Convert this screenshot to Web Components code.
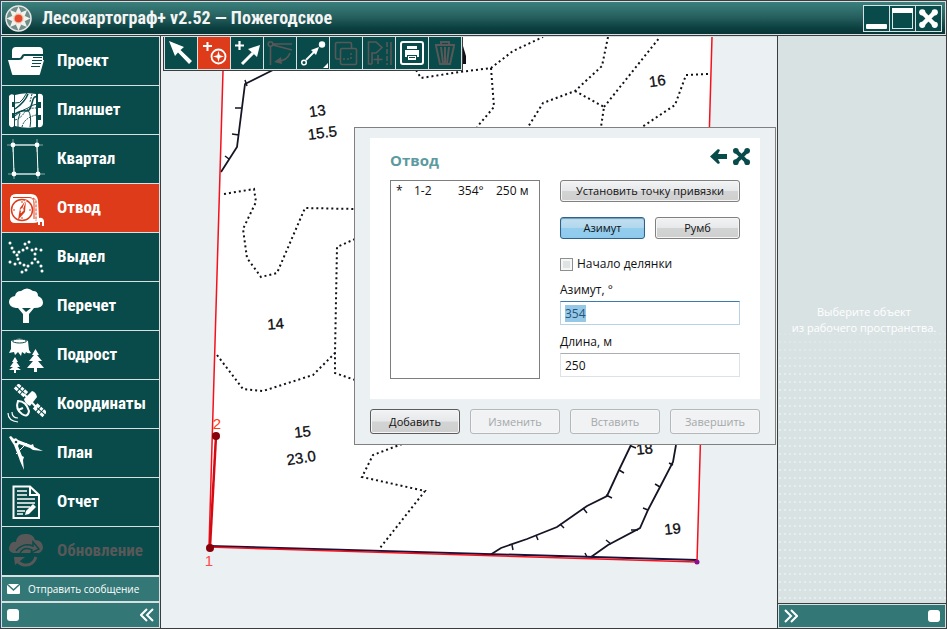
<!DOCTYPE html>
<html lang="ru">
<head>
<meta charset="utf-8">
<title>Лесокартограф+</title>
<style>
  html, body { margin: 0; height: 100%; }
  body {
    --deep: #094b4a; --teal: #337876; --line: #d8e1e1; --edge: #3c3c3e; --accent: #de3b1a; --pale: #ebf0f3; --off: #585858;
    --head: "Roboto Condensed", "Open Sans Condensed", Roboto, sans-serif;
    font-family: "Open Sans", "Noto Sans", sans-serif; font-size: 12px; color: #111;
  }
</style>
</head>
<body>
<app-window>
  <title-bar slot="title">Лесокартограф+ v2.52 — Пожегодское</title-bar>
  <side-nav slot="nav">
    <nav-item icon="project">Проект</nav-item>
    <nav-item icon="sheet">Планшет</nav-item>
    <nav-item icon="quarter">Квартал</nav-item>
    <nav-item icon="allot" active>Отвод</nav-item>
    <nav-item icon="stand">Выдел</nav-item>
    <nav-item icon="tree">Перечет</nav-item>
    <nav-item icon="growth">Подрост</nav-item>
    <nav-item icon="sat">Координаты</nav-item>
    <nav-item icon="plan">План</nav-item>
    <nav-item icon="report">Отчет</nav-item>
    <nav-item icon="update" disabled>Обновление</nav-item>
  </side-nav>
  <map-view slot="map">
    <tool-bar slot="tools">
      <tool-button icon="pointer" label="Выбор"></tool-button>
      <tool-button icon="anchor" label="Точка привязки" active></tool-button>
      <tool-button icon="addline" label="Добавить линию"></tool-button>
      <tool-button icon="angle" label="Угол" disabled></tool-button>
      <tool-button icon="segment" label="Отрезок"></tool-button>
      <tool-button icon="copy" label="Копировать" disabled></tool-button>
      <tool-button icon="park" label="Добавить участок" disabled></tool-button>
      <tool-button icon="print" label="Печать"></tool-button>
      <tool-button icon="trash" label="Удалить" disabled></tool-button>
    </tool-bar>
    <allot-dialog slot="dialog"></allot-dialog>
  </map-view>
  <info-panel slot="info">Выберите объект<br>из рабочего пространства.</info-panel>
</app-window>

<script>
const NAV = {
  project: `<path fill="currentColor" d="M6 17V10Q6 6 10 6H33Q37 6 37 10V13H18Q16 13 15 16L14 17Z"/><path fill="currentColor" d="M2 19H13Q16 19 17 17L18 15H37V19H38L34 33Q34 34 33 34H7Q6 34 6 33Z"/><path fill="none" stroke="var(--bg)" d="M27 16.5H36M26 19.5H36M26 22.5H35M25 25.5H34"/>`,
  sheet: `<path fill="currentColor" d="M3 6Q5 3 8 5V12H6V17H8V23H6V28H8V36Q5 39 3 35ZM9 5Q19 2 30 4V37Q20 39 9 36ZM32 4Q36 3 37 6V34Q36 38 32 37V30H35V25H32V18H35V12H32Z"/><g fill="none" stroke="var(--bg)"><path stroke-width="1.500" d="M9 24Q16 20 20 21T26 13T31 8M22 4Q19 12 9 19"/><path d="M9 13Q14 14 17 9T21 3M31 14Q25 15 22 18Q15 20 9 26M14 23Q11 30 12 37M22 20Q26 26 24 37"/><path stroke-dasharray="2 1" d="M9 30Q15 28 18 23T30 18M26 4L24 12M16 37Q18 28 30 25"/></g>`,
  quarter: `<g fill="none" stroke="currentColor"><path d="M7 6H31L32 35H8Z"/><path opacity=".5" d="M1 6H37M7 0V13M31 0V13M2 35H39M8 29V40M32 29V40"/></g><g fill="currentColor"><circle cx="7" cy="6" r="2.4"/><circle cx="31" cy="6" r="2.4"/><circle cx="8" cy="35" r="2.4"/><circle cx="32" cy="35" r="2.4"/></g>`,
  allot: `<path fill="currentColor" d="M4 12Q4 6 10 6H25Q31 6 32 12L33 30Q37 29 38 33V38H36V34H34V37H32V34Q30 35 27 35H9Q4 35 4 30Z"/><g fill="none" stroke="var(--bg)"><circle cx="16" cy="22" r="10.5" stroke-width="1.500"/><path d="M7 9.500H23Q28 9.500 28 15V31" /><path d="M27 10L30 12V33" stroke-dasharray="3 1"/><path d="M16 13V15M16 29V31M7 22H9M23 22H25"/></g><path fill="var(--bg)" d="M20 12L19 24L12 32L14 20Z"/><circle cx="16" cy="22" r="1.7" fill="currentColor"/><path stroke="currentColor" d="M20 12L15 25"/>`,
  stand: `<path fill="none" stroke="currentColor" stroke-width="3" stroke-linecap="round" d="${[[4,6],[6,11],[8,15],[13,15],[17,13],[21,11],[19,7],[23,5],[26,13],[30,12],[35,13],[29,17],[29,22],[26,26],[32,25],[35,29],[36,34],[22,29],[18,28],[20,33],[16,35],[14,26],[9,27],[4,25],[12,22],[11,18]].map(p => `M${p[0]} ${p[1]}h.01`).join('')}"/>`,
  tree: `<path fill="currentColor" d="M10 22Q3 21 3 16Q3 11 9 10Q10 5 15 5Q21 0 27 5Q32 5 32 10Q37 12 37 17Q37 22 28 22L23 28V37H17V28L12 22Z"/><path fill="var(--bg)" d="M16 22H25L20 26Z"/>`,
  growth: `<path fill="currentColor" d="M5 6Q13 1 22 6L23 15L25 18Q22 19 20 17L19 19L16 17L15 21L12 17L9 20L8 17L3 18L5 14Z"/><ellipse cx="13.5" cy="6" rx="7" ry="2" fill="none" stroke="var(--bg)"/><path fill="currentColor" d="M9 22L12 27H10.500L14 32H11L15 35H10V38H8V35H3L7 32H4L7.500 27H6ZM29.500 14L33 20H31L36 26H32L38 33H31V37H28V33H21L27 26H23L28 20H26Z"/>`,
  sat: `<g transform="rotate(42 15 7)" fill="currentColor"><path d="M8 3h4v3H8zM13 3h3v3h-3zM17 3h4v3h-4zM8 7h4v3H8zM13 7h3v3h-3zM17 7h4v3h-4z"/></g><g transform="translate(19 20) rotate(42 15 7)" fill="currentColor"><path d="M8 3h4v3H8zM13 3h3v3h-3zM17 3h4v3h-4zM8 7h4v3H8zM13 7h3v3h-3zM17 7h4v3h-4z"/></g><path stroke="currentColor" stroke-width="2" d="M18 10L31 24"/><path fill="currentColor" d="M18 15L26 7Q30 8 31 13L24 22Q19 20 18 15Z"/><path fill="none" stroke="currentColor" stroke-width="2" d="M12 17Q20 17 23 27Q22 34 16 30Q9 25 12 17ZM17 24L12 26"/><path fill="none" stroke="currentColor" stroke-width="1.200" d="M2 29Q2 37 12 38M6 28Q6 34 12 34"/>`,
  plan: `<path fill="currentColor" d="M3 4L5 3L8 6Q10 4 12 7L25 12L27 11L28 14L37 18L27 17L24 15L13 11L12 13L16 23L18 24L17 27L18 37L14 28L13 25L8 12L6 9Z"/><circle cx="10" cy="9" r="1.300" fill="var(--bg)"/><path stroke="currentColor" d="M10 21L21 10" fill="none"/>`,
  report: `<path fill="none" stroke="currentColor" stroke-width="2" d="M7.500 4.500H24L33 13V36H7.500ZM24 4.500V13H33"/><path stroke="currentColor" stroke-width="1.600" d="M11 9H21M11 13H21M11 17H29M11 21H29M11 25H24M11 29H19M11 32H17"/><path fill="currentColor" d="M19 33L20 29L27 22L30 25L23 32Z"/>`,
  update: `<path fill="currentColor" d="M7 22Q1 20 4 14Q6 10 10 11Q11 3 19 3Q27 2 29 9Q36 9 37 16Q37 20 33 22Z"/><path fill="none" stroke="var(--bg)" stroke-width="1.500" d="M10 20Q17 11 27 15L27 11L33 18L25 22L26 19Q18 15 14 22"/><path fill="none" stroke="currentColor" stroke-width="3" d="M30 26Q27 35 18 34Q13 33 11 29"/><path fill="currentColor" d="M8 26H19L9 34Z"/>`
};
const TOOL = {
  pointer: `<path fill="currentColor" d="M4 4L19 10L15.500 13L27 24L24 27L13 15.500L10 19Z"/>`,
  anchor: `<path stroke="currentColor" stroke-width="2" d="M5 9H14M9.500 5V14"/><circle cx="20.500" cy="19.500" r="7" fill="none" stroke="currentColor" stroke-width="1.800"/><path fill="currentColor" d="M20.500 14L21.700 18.300L26 19.500L21.700 20.700L20.500 25L19.300 20.700L15 19.500L19.300 18.300Z"/>`,
  addline: `<path stroke="currentColor" stroke-width="2.200" d="M4 8.500H13M8.500 4V13"/><path stroke="currentColor" stroke-width="3" d="M11 27L22 16"/><path fill="currentColor" d="M29 8L26 20L17 12Z"/>`,
  angle: `<g fill="none" stroke="currentColor" stroke-width="1.600"><circle cx="6.500" cy="7" r="2.300"/><path d="M9 7H28M9 8L28 13M6.500 9V28M26 16Q23 24 14 24"/></g><path fill="currentColor" d="M10 25L17 20L18 27Z"/>`,
  segment: `<circle cx="7" cy="25.500" r="2.300" fill="none" stroke="currentColor" stroke-width="1.500"/><circle cx="25" cy="7.500" r="3.200" fill="currentColor"/><path stroke="currentColor" stroke-width="1.800" d="M9 23L18 14"/><path fill="currentColor" d="M22 10L19 18L14 13ZM31 26V31H26Z"/>`,
  copy: `<path fill="none" stroke="currentColor" stroke-width="1.600" d="M10 22H7Q5.500 22 5.500 20V7Q5.500 5.500 7 5.500H20Q21.500 5.500 21.500 7V11M12 11.500H25Q26.500 11.500 26.500 13V26Q26.500 27.500 25 27.500H12Q10.500 27.500 10.500 26V13Q10.500 11.500 12 11.500Z"/><path fill="none" stroke="currentColor" stroke-width="1.500" stroke-dasharray="2 2" d="M13 22H21V14"/>`,
  park: `<path fill="none" stroke="currentColor" stroke-width="1.600" d="M9 27H5.500V5H13L19 10.500L13 16H9V27M15 18V27M10.500 22.500H19.500"/><path fill="none" stroke="currentColor" stroke-width="1.600" stroke-dasharray="5 2" d="M24 5V28"/><path stroke="currentColor" stroke-width="1.600" d="M28 5V28"/>`,
  print: `<rect x="5" y="5" width="22" height="22" rx="2" fill="none" stroke="currentColor" stroke-width="2"/><path fill="currentColor" d="M11 9H21V12H11ZM9 13H23V20H21V18H11V20H9ZM12 19H20V23H12Z"/><path stroke="var(--bg)" d="M13 20.500H19"/>`,
  trash: `<path fill="none" stroke="currentColor" stroke-width="2" d="M6 8H26M12 7V5H20V7M7 9L11 27H21L25 9M12 10L14 26M16 10V26M20 10L18 26"/>`
};
const KNOT = `<g fill="currentColor"><path d="M5 8L8 5L19 16L16 19ZM16 5L19 8L8 19L5 16Z"/><circle cx="6" cy="6" r="3"/><circle cx="18" cy="6" r="3"/><circle cx="6" cy="18" r="3"/><circle cx="18" cy="18" r="3"/></g>`;

class Base extends HTMLElement {
  constructor() { super(); this.attachShadow({ mode: 'open' }); }
  connectedCallback() {
    this.shadowRoot.innerHTML = `<style>*{box-sizing:border-box}button{font:inherit;color:inherit;margin:0;padding:0;border:0;background:none}svg{display:block}${this.css()}</style>${this.html()}`;
    this.ready();
  }
  css() { return ''; } html() { return ''; } ready() {}
}

customElements.define('app-window', class extends Base {
  css() { return `:host{display:grid;box-sizing:border-box;height:100vh;grid-template:auto minmax(0,1fr)/159px minmax(0,1fr) 168px;border:1px solid var(--edge);border-left-color:#2b4a6a;background:var(--edge);column-gap:1px}
    ::slotted([slot=title]){grid-column:1/-1}`; }
  html() { return `<slot name="title"></slot><slot name="nav"></slot><slot name="map"></slot><slot name="info"></slot>`; }
});

customElements.define('title-bar', class extends Base {
  css() { return `:host{display:block;border-bottom:1px solid var(--edge)}
    header{display:flex;align-items:center;height:34px;padding:0 3px 0 3px;border:1px solid var(--line);background:linear-gradient(#3a807d,#27615f 45%,#0c4141 80%,#083435);color:#f4f4f4}
    h1{flex:1;margin:0 0 0 10px;font:bold 18px/32px var(--head);white-space:nowrap}
    .win{display:flex;gap:1px;padding:1px;background:var(--line)}
    button{width:25px;height:25px;background:var(--deep)}`; }
  html() { return `<header><svg width="27" height="27" viewBox="0 0 27 27"><circle cx="13.500" cy="13.500" r="12.500" fill="#6f8d8a" stroke="#e8e8e8" stroke-width="1.500"/><g fill="#f2f2ec">${[0,45,90,135,180,225,270,315].map(a => `<path transform="rotate(${a} 13.5 13.5)" d="M13.500 1.500L16 7L15 12H12L11 7Z"/>`).join('')}</g><circle cx="13.500" cy="13.500" r="5" fill="#f0b8a0"/><circle cx="13.500" cy="13.500" r="3.800" fill="#e5492b"/></svg><h1><slot></slot></h1><div class="win">
    <button aria-label="Свернуть"><svg width="25" height="25"><rect x="2" y="18" width="21" height="5" rx="1" fill="#fff"/></svg></button>
    <button aria-label="Развернуть"><svg width="25" height="25"><rect x="2.500" y="2.500" width="20" height="20" fill="none" stroke="#dfe8e8"/><rect x="2" y="2" width="21" height="5" fill="#fff"/></svg></button>
    <button aria-label="Закрыть"><svg width="25" height="25" viewBox="0 0 24 24" color="#fff">${KNOT}</svg></button></div></header>`; }
});

customElements.define('side-nav', class extends Base {
  css() { return `:host{display:flex;flex-direction:column;min-height:0;background:var(--line);border:1px solid var(--line);border-right:0;border-left:0;padding:0 1px;gap:2px}
    nav{flex:1;display:grid;grid-auto-rows:minmax(0,1fr);gap:1px;min-height:0}
    .msg,.foot{display:flex;align-items:center;height:24px;background:var(--teal);color:#fff;width:100%}
    .msg{padding:0 5px;gap:8px;font-size:10px}
    .foot{justify-content:space-between;padding:0 5px}`; }
  html() { return `<nav><slot></slot></nav><button class="msg"><svg width="13" height="11" viewBox="0 0 13 11"><path fill="#fff" d="M1 0H12L6.500 5ZM0 1L6.500 7L13 1V9Q13 10 12 10H1Q0 10 0 9Z"/></svg>Отправить сообщение</button>
    <div class="foot"><svg width="12" height="12"><rect width="12" height="12" rx="3" fill="#fff"/></svg><button aria-label="Скрыть панель"><svg width="14" height="14"><path fill="none" stroke="#fff" stroke-width="2" d="M7 1L1 7L7 13M13 1L7 7L13 13"/></svg></button></div>`; }
});

customElements.define('nav-item', class extends Base {
  css() { return `:host{display:block;--bg:var(--deep)}:host([active]){--bg:var(--accent)}
    button{display:flex;align-items:center;gap:11px;width:100%;height:100%;padding:0 4px;background:var(--bg);color:#fff;text-align:left;font:bold 17px/20px var(--head)}
    span{padding-bottom:2px}
    button:disabled{color:var(--off)}svg{flex:none}`; }
  html() { return `<button ${this.hasAttribute('disabled') ? 'disabled' : ''}><svg width="40" height="40" viewBox="0 0 40 40">${NAV[this.getAttribute('icon')]}</svg><span><slot></slot></span></button>`; }
});

customElements.define('tool-bar', class extends Base {
  css() { return `:host{display:flex;gap:1px;padding:1px;background:var(--line);border:1px solid var(--edge);border-top:0}`; }
  html() { return `<slot></slot>`; }
});
customElements.define('tool-button', class extends Base {
  css() { return `:host{display:block;--bg:var(--deep)}:host([active]){--bg:var(--accent)}
    button{display:block;width:32px;height:32px;background:var(--bg);color:#fff}button:disabled{color:var(--off)}`; }
  html() { return `<button aria-label="${this.getAttribute('label')}" ${this.hasAttribute('disabled') ? 'disabled' : ''}><svg width="32" height="32">${TOOL[this.getAttribute('icon')]}</svg></button>`; }
});

customElements.define('map-view', class extends Base {
  css() { return `:host{display:block;position:relative;overflow:hidden;background:var(--pale);border-top:1px solid var(--line)}
    .map{position:absolute;inset:0;width:100%;height:100%}
    slot{display:block;position:absolute}
    slot[name=tools]{left:2px;top:-1px}slot[name=dialog]{right:1px;top:90px}
    text{font:15px "Liberation Sans",sans-serif;text-anchor:middle}`; }
  html() { return `<svg class="map"><g transform="translate(-161 -37)">
    <path fill="#fff" d="M224 30L712 30L697 562L209 547Z"/>
    <g fill="none" stroke="#101018" stroke-width="2" stroke-dasharray="2 3">
      <path d="M416 70L421 78L460 72L491 68L513 51L543 37M491 68L494 107L477 127"/>
      <path d="M608 37L602 66L575 91L543 103L528 127M575 91L604 107L601 127M604 107L660 37M708 74L686 75L675 105L642 127"/>
      <path d="M224 194L254 189L256 202L243 229L247 258L261 277L277 273L305 208L355 209M355 239L337 247L335 353V373L355 380"/>
      <path d="M217 355L243 389L263 391L313 375L335 353M402 444L373 455L362 477L425 491L380 548"/>
    </g>
    <g fill="none" stroke="#151525" stroke-width="1.800">
      <path d="M273 70L245 84L237 147L221 172"/>
      <path d="M631 445L619 470L607 496L587 506L557 527L527 539L501 548L490 555M676 445L673 462L660 487L648 510L640 528L608 545L591 557"/>
      <path stroke-width="1.500" d="M247 86L245 80M241 108H235M239 135L232 134M229 159L225 156M631 446L636 448M619 470L624 473M606 495L612 498M583 508L587 513M560 524L564 528M536 535L538 540M512 545L513 550M673 465L669 463M660 487L655 484M648 510L643 508M638 530L631 530M611 544L606 540M587 557L585 553"/>
    </g>
    <path fill="#101018" d="M463 46L466 56V64H463Z"/>
    <path fill="none" stroke="#19113a" stroke-width="2" d="M209 546L697 560"/>
    <path fill="none" stroke="#f5101c" stroke-width="1.500" d="M224 37L209 547L697 562L712 37"/>
    <path stroke="#d30a12" stroke-width="2.500" d="M216 436L210 547"/>
    <circle cx="216" cy="436" r="4" fill="#850008"/><circle cx="210" cy="548" r="4" fill="#850008"/><circle cx="697" cy="562" r="2.500" fill="#8a1090"/>
    <g fill="#ff3b12"><text x="217" y="429">2</text><text x="209" y="566" fill="#ff4a4a">1</text></g>
    <g fill="#0c0c10" stroke="#0c0c10" stroke-width=".3">
      <text transform="translate(318 116) rotate(-8)">13</text><text transform="translate(323 138) rotate(-8)">15.5</text>
      <text transform="translate(658 86) rotate(-8)">16</text><text transform="translate(276 329) rotate(-5)">14</text>
      <text transform="translate(303 437) rotate(-6)">15</text><text transform="translate(302 463) rotate(-9)">23.0</text>
      <text transform="translate(645 454) rotate(-6)">18</text><text transform="translate(673 534) rotate(-6)">19</text>
    </g></g></svg><slot name="tools"></slot><slot name="dialog"></slot>`; }
});

customElements.define('flat-button', class extends Base {
  css() { return `:host{display:block;flex:1}
    button{width:100%;height:100%;min-height:22px;font-size:11px;line-height:16px;border:1px solid #808080;border-radius:3px;background:linear-gradient(#f2f3f4,#e6e8e9 48%,#d2d3d4 52%,#cfcfcf);box-shadow:inset 0 0 0 1px #f6f6f6;white-space:nowrap}
    :host([pressed]) button{border-color:#2c628b;background:linear-gradient(#c4dff0,#b2d8ee 48%,#93cdee 52%,#8fcaec);box-shadow:inset 0 1px 1px #6d9db9}
    :host([main]) button{border-color:#5c5c5c}
    button:disabled{color:#a5a8aa;border-color:#b4b8ba;background:#f0f2f3}`; }
  html() { return `<button ${this.hasAttribute('disabled') ? 'disabled' : ''}><slot></slot></button>`; }
});

customElements.define('allot-dialog', class extends Base {
  css() { return `:host{display:block;box-sizing:border-box;width:422px;background:var(--pale);border:1px solid #808080;padding:10px 15px}
    .body{background:#fff;padding:10px 20px 20px}
    header{display:flex;align-items:center;height:24px;margin-bottom:8px;color:var(--deep)}
    header button+button{margin-left:6px}header div{display:flex;margin:0 -10px 8px 0}
    h2{flex:1;margin:0;font:bold 15px/24px "Open Sans","Noto Sans",sans-serif;color:#5b9a9f}
    .cols{display:grid;grid-template-columns:150px 1fr;column-gap:20px}
    .list{border:1px solid #7e7e7e;min-height:199px}
    table{border-collapse:collapse;width:100%;table-layout:fixed;line-height:20px}td{padding:0}
    td:nth-child(1){width:23px;padding-left:5px}td:nth-child(2){width:44px}td:nth-child(3){width:38px}
    .form{display:flex;flex-direction:column}.wide{flex:none}
    .pair{display:flex;gap:10px;margin:15px 0 17px}
    label{display:block;line-height:16px}.chk{display:flex;align-items:center;gap:4px;margin-bottom:10px}
    .chk input{appearance:none;width:13px;height:13px;margin:0;border:1px solid #8e8f8f;background:#dfe3e4;box-shadow:inset 0 0 0 2px #f6f6f6}
    .txt{display:block;width:100%;height:24px;margin:3px 0 9px;padding:0 4px;border:1px solid #dce3e6;border-top-color:#abadb3;background:#fff;font:inherit;color:inherit;outline:0}
    .txt:focus{border-color:#b7d3e8;border-top-color:#3d7bad}.txt:last-child{margin-bottom:0}
    .txt::selection{background:#94c8e6;color:#25537a}
    footer{display:flex;gap:10px;height:25px;margin-top:10px}`; }
  html() { return `<div class="body"><header><h2>Отвод</h2><div>
      <button aria-label="Назад"><svg width="17" height="17"><path fill="currentColor" d="M0 8.500L8 1L10 2L8 6H17V11H8L10 15L8 16Z"/></svg></button>
      <button aria-label="Закрыть"><svg width="17" height="17" viewBox="3 3 18 18">${KNOT}</svg></button></div></header>
    <div class="cols"><div class="list"><table><tr><td>*</td><td>1-2</td><td>354°</td><td>250 м</td></tr></table></div>
    <div class="form"><flat-button class="wide">Установить точку привязки</flat-button>
      <div class="pair"><flat-button pressed>Азимут</flat-button><flat-button>Румб</flat-button></div>
      <label class="chk"><input type="checkbox">Начало делянки</label>
      <label for="az">Азимут, °</label><input class="txt" id="az" value="354">
      <label for="len">Длина, м</label><input class="txt" id="len" value="250"></div></div></div>
    <footer><flat-button main>Добавить</flat-button><flat-button disabled>Изменить</flat-button><flat-button disabled>Вставить</flat-button><flat-button disabled>Завершить</flat-button></footer>`; }
  ready() { const i = this.shadowRoot.getElementById('az'); i.focus(); i.select(); }
});

customElements.define('info-panel', class extends Base {
  css() { return `:host{display:flex;flex-direction:column;min-width:0;background:#d9e2e3;color:#fff}
    .hint{flex:1;display:flex;flex-direction:column;justify-content:center;align-items:center;text-align:center;font-size:11px;line-height:16px;white-space:nowrap;padding-left:4px;
      background:linear-gradient(#d9e2e3 50%,transparent 60%),radial-gradient(circle at 2px 2px,#e6eded 0 1px,transparent 1px) 0 0/5px 8px}
    .foot{display:flex;align-items:center;justify-content:space-between;height:24px;padding:0 5px;background:var(--teal);border:1px solid var(--line);outline:1px solid var(--edge)}`; }
  html() { return `<div class="hint"><div><slot></slot></div></div><div class="foot"><button aria-label="Показать панель"><svg width="14" height="14"><path fill="none" stroke="#fff" stroke-width="2" d="M1 1L7 7L1 13M7 1L13 7L7 13"/></svg></button><svg width="12" height="12"><rect width="12" height="12" rx="3" fill="#fff"/></svg></div>`; }
});
</script>
</body>
</html>
